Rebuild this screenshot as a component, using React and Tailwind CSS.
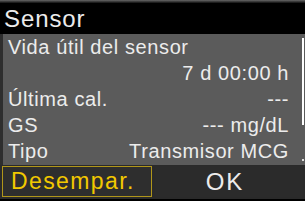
import React from "react";

const rows = [
  { label: "Vida útil del sensor", value: "" },
  { label: "", value: "7 d 00:00 h" },
  { label: "Última cal.", value: "---" },
  { label: "GS", value: "--- mg/dL" },
  { label: "Tipo", value: "Transmisor MCG" },
];

export default function App() {
  return (
    <div
      className="w-[305px] h-[201px] bg-black flex flex-col overflow-hidden text-[#ececec]"
      style={{ fontFamily: '"Liberation Sans", Arial, sans-serif' }}
    >
      <div className="h-[3px] bg-gradient-to-b from-[#6a6a6a] to-[#111]" />
      <div className="h-[31px] flex items-center pl-[4px] text-[24px] tracking-[0.9px] leading-none">
        Sensor
      </div>

      <div className="flex flex-1 bg-[#2e2e2e] pl-[3px]">
        <div className="relative flex-1 bg-[#5b5b5b] h-[131px] pl-[5px] pr-[16px]">
          {rows.map((r, i) => (
            <div
              key={i}
              className="h-[26px] leading-[26px] flex justify-between text-[20px] tracking-[0.6px] whitespace-nowrap"
            >
              <span>{r.label}</span>
              <span>{r.value}</span>
            </div>
          ))}
          <div className="absolute right-[1px] top-[4px] w-[2px] h-[87px] bg-white" />
          <div className="absolute right-[1px] top-[125px] w-[2px] h-[2px] bg-[#ddd]" />
        </div>
      </div>

      <div className="flex h-[34px] bg-[#2a2a2a] px-[2px] pt-[1px] pb-[2px] gap-[3px]">
        <div className="w-[150px] border border-[#b0961a] bg-[#2e2e2e] flex items-center pl-[8px] text-[#f2c800] text-[23px] tracking-[1.4px] leading-none">
          Desempar.
        </div>
        <div className="flex-1 bg-[#2b2b2b] flex items-center justify-center pr-[8px] text-[24px] tracking-[2px] leading-none">
          OK
        </div>
      </div>
      <div className="flex-1 bg-black" />
    </div>
  );
}
